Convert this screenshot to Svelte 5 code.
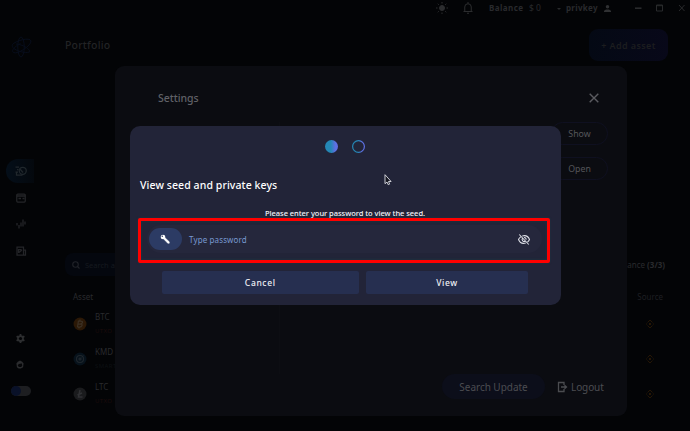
<script>
  const coins = [
    { name: 'BTC', kind: 'UTXO', color: '#2b1806', sub: '#1c0b0b' },
    { name: 'KMD', kind: 'SMART CHAIN', color: '#07121b', sub: '#0d1013' },
    { name: 'LTC', kind: 'UTXO', color: '#1a1b1d', sub: '#1c0b0b' }
  ];
</script>

<div class="window">
  <header class="topbar">
    <svg class="sun" width="12" height="12" viewBox="0 0 24 24" fill="#2c2d2f" stroke="#2c2d2f" stroke-width="2"><circle cx="12" cy="12" r="5" /><path d="M12 0v3M12 21v3M0 12h3M21 12h3M3.5 3.5l2 2M18.500 18.500l2 2M20.500 3.500l-2 2M3.500 20.500l2-2" /></svg>
    <svg class="bell" width="10" height="12" viewBox="0 0 20 24" fill="none" stroke="#2c2d2f" stroke-width="2"><path d="M1 19h18M3.500 19V10a6.500 6.500 0 0 1 13 0v9M10 0v3M8 22.500h4" /></svg>
    <b class="balance">Balance</b><span class="amount">$ 0</span>
    <i class="caret"></i><b class="user">privkey</b>
    <svg class="person" width="7" height="7" viewBox="0 0 16 16" fill="#303133"><circle cx="8" cy="4" r="4" /><path d="M0 16v-2c0-5 16-5 16 0v2z" /></svg>
    <svg class="controls" width="54" height="8" viewBox="0 0 54 8" fill="none" stroke="#292a2c"><path d="M1 4.200h6.500" stroke-width="1.600" /><path d="M22.500 1h6v6h-6z M22 1.700h7M45 1l5.500 6M50.500 1L45 7" /></svg>
  </header>

  <div class="body">
    <nav>
      <svg class="logo" width="21" height="22" viewBox="0 0 42 44" fill="none" stroke="#070d1b" stroke-width="2"><ellipse cx="20" cy="22" rx="6.500" ry="20" /><path d="M3 17c5-7 35-16 37-7 1 9-28 28-35 23-6-4 4-13 14-18M3 17c-5 9 22 19 34 15 3-5-15-16-27-16" /></svg>
      <div class="navitem active">
        <svg width="12" height="10" viewBox="0 0 24 20" fill="none" stroke="#20272c" stroke-width="2.500"><path d="M1 2h7M4 7h3M1 12h5M3 12v6h12" /><circle cx="15.500" cy="9.500" r="7" /><path d="M10 6l6 7" /></svg>
      </div>
      <div class="navitem">
        <svg width="10" height="10" viewBox="0 0 20 20" fill="none" stroke="#242528" stroke-width="2.500"><rect x="1.500" y="2" width="17" height="16" rx="2" /><path d="M2 6h16M5 11h5M13 11h4" stroke-width="3" /></svg>
      </div>
      <div class="navitem">
        <svg width="10" height="10" viewBox="0 0 20 20" fill="none" stroke="#242528" stroke-width="2.600"><path d="M2 8v5M6 12v7M10 7v8M14 1v14M18 5v6" /></svg>
      </div>
      <div class="navitem">
        <svg width="11" height="10" viewBox="0 0 22 20" fill="none" stroke="#242528" stroke-width="2.500"><path d="M15 7V2H2v16h17V8h-4v10" /><path d="M5 14V7h6M6 13l6-5" /></svg>
      </div>
      <svg class="gear" width="9" height="9" viewBox="0 0 20 20"><g fill="#2d2e30"><circle cx="10" cy="10" r="7.500" /><path d="M8 0h4v20H8z" /><path d="M8 0h4v20H8z" transform="rotate(60 10 10)" /><path d="M8 0h4v20H8z" transform="rotate(120 10 10)" /></g><circle cx="10" cy="10" r="3.500" fill="#030406" /></svg>
      <svg class="face" width="8" height="9" viewBox="0 0 18 18"><path d="M9 0l4 2 4 4-1 9-5 3H6l-4-3L1 6l4-4z" fill="#2b2c2e" /><path d="M4 11c1-5 5-2 9-5l1 6c-2 4-8 4-10-1z" fill="#050608" /></svg>
      <div class="toggle"><i></i></div>
    </nav>

    <main>
      <div class="pagehead"><h1>Portfolio</h1><button class="add">+ Add asset</button></div>
      <div class="filters">
        <div class="search">
          <svg width="8" height="8" viewBox="0 0 16 16" fill="none" stroke="#212329" stroke-width="2.200"><circle cx="7" cy="7" r="5.500" /><path d="M11 11l4 4" /></svg>
          <span>Search asset</span>
        </div>
        <span class="withbalance">Assets with balance <b>(3/3)</b></span>
      </div>
      <div class="thead"><span>Asset</span><span class="source">Source</span></div>
      {#each coins as coin}
        <div class="row">
          <svg class="coin" width="14" height="14" viewBox="0 0 28 28">
            <circle cx="14" cy="14" r="13" fill={coin.color} />
            {#if coin.name === 'BTC'}
              <path d="M11 7l-2 13M10 8h5q5 0 4 3-1 3-5 3h-4 5q4 0 3 3-1 3-5 3H9M14 5v3M12 20v3" fill="none" stroke="#3b3024" stroke-width="2.500" />
            {:else if coin.name === 'KMD'}
              <circle cx="14" cy="14" r="7" fill="none" stroke="#20272d" stroke-width="2.200" /><path d="M14 11l3 3-3 3-3-3zM17 11l4-4" fill="#20272d" stroke="#20272d" stroke-width="1.600" />
            {:else}
              <path d="M14 6l-3 14h8M9 16l9-4" fill="none" stroke="#303134" stroke-width="3" />
            {/if}
          </svg>
          <div class="names"><span>{coin.name}</span><small style:color={coin.sub}>{coin.kind}</small></div>
          <svg class="chain" width="8" height="8" viewBox="0 0 16 16" fill="none" stroke="#251605" stroke-width="2"><path d="M3 5l5-5 5 5M3 11l5 5 5-5M8 6l2 2-2 2-2-2zM0 8h2M14 8h2" /></svg>
        </div>
      {/each}
    </main>
  </div>

  <section class="settings">
    <div class="sethead">
      <h2>Settings</h2>
      <svg width="10" height="10" viewBox="0 0 10 10" stroke="#5a5b60" stroke-width="1.400"><path d="M.7.7l8.600 8.600M9.300.7L.7 9.300" /></svg>
    </div>
    <div class="setbody">
      <div class="pane">
        <button>Show</button>
        <button>Open</button>
      </div>
    </div>
    <footer>
      <button class="update">Search Update</button>
      <span class="logout">
        <svg width="9" height="10" viewBox="0 0 18 20" fill="none" stroke="#4b4c50" stroke-width="2.600"><path d="M12 6V1H1v18h11v-5M6 10h10M13 6.500l4 3.500-4 3.500" /></svg>
        <span>Logout</span>
      </span>
    </footer>
  </section>

  <section class="dialog">
    <div class="steps">
      <svg width="40" height="13" viewBox="0 0 40 13">
        <defs>
          <linearGradient id="dotfill"><stop offset=".45" stop-color="#2487b5" /><stop offset=".8" stop-color="#5e70e4" /></linearGradient>
        </defs>
        <circle cx="6.500" cy="6.500" r="6.500" fill="url(#dotfill)" />
        <circle cx="33.500" cy="6.500" r="5.900" fill="none" stroke="url(#dotfill)" stroke-width="1.200" />
      </svg>
    </div>
    <h3>View seed and private keys</h3>
    <p>Please enter your password to view the seed.</p>
    <div class="highlight">
      <div class="field">
        <span class="key"><svg width="10" height="10" viewBox="0 0 20 20"><path d="M9.500 7L18.500 15.500V18.500H15.500L14 17V15.500H12.500L7 9.500Z" fill="#fff" stroke="#fff" /><circle cx="6" cy="6" r="4.600" fill="#fff" /><circle cx="4.500" cy="4.700" r="1.500" fill="#2c3b64" /></svg></span>
        <span class="placeholder">Type password</span>
        <svg class="eye" width="12" height="11" viewBox="0 0 24 22" fill="none" stroke="#dddfe7" stroke-width="2.100"><path d="M8.500 4C15 2 20.500 5 23 11c-1 2.200-2.300 3.600-4 5M15.500 18C9 20 3.500 17 1 11c1-2.200 2.500-4 4.500-5.300M2.500 1L21.500 21M9 8a4.300 4.300 0 0 0 6 6M12 6.800c3 0 4.500 2 4.200 4.600" /></svg>
      </div>
    </div>
    <div class="actions"><button class="cancel">Cancel</button><button class="view">View</button></div>
  </section>

  <svg class="cursor" width="8" height="12" viewBox="0 0 8 12"><path d="M1 .7v9l2-1.700 1.200 2.700 1.400-.6-1.100-2.600h2.600z" fill="#151620" stroke="#dedfe5" stroke-width=".9" /></svg>
</div>

<style>
  :global(body) { background: #030406; overflow: hidden; }
  .window { position: relative; box-sizing: border-box; width: 690px; height: 431px; overflow: hidden; background: #030406; color: #292a2d; font-family: "Noto Sans", sans-serif; font-size: 8px; white-space: nowrap; }
  svg { display: block; flex: none; overflow: visible; }
  h1, h2, h3, p { margin: 0; font-weight: 500; }
  button { border: 0; padding: 0; margin: 0; font: inherit; color: inherit; box-sizing: border-box; }

  .topbar { height: 16px; display: flex; align-items: center; padding-left: 436px; line-height: 16px; }
  .bell { margin-left: 15px; }
  .balance { margin-left: 16px; width: 36px; letter-spacing: .45px; }
  .amount { margin-left: 4px; width: 14px; font-size: 8.500px; }
  .caret { margin: 1px 5px 0 14px; border: 2px solid transparent; border-top-color: #292a2c; border-bottom: 0; }
  .user { width: 34px; letter-spacing: .3px; }
  .person { margin-left: 4px; }
  .controls { margin-left: 23px; }

  .body { display: flex; height: 415px; }
  nav { width: 41px; height: 100%; flex: none; display: flex; flex-direction: column; align-items: flex-start; }
  .logo { margin: 20px 0 101px 11px; }
  .navitem { height: 24px; width: 28px; margin: 0 0 2.500px 6px; display: flex; align-items: center; justify-content: center; padding-left: 2px; box-sizing: border-box; }
  .active { border-radius: 12px 0 0 12px; background: linear-gradient(90deg, #040e19, #04080d); }
  .gear { margin: 68.500px 0 17.500px 16px; }
  .face { margin-left: 16px; }
  .toggle { margin: 17px 0 0 11px; width: 20px; height: 10px; border-radius: 5px; background: #1d1e21; }
  .toggle i { display: block; width: 10px; height: 10px; border-radius: 50%; background: #091128; }

  main { flex: 1; padding-left: 24px; padding-right: 22px; }
  .pagehead { display: flex; align-items: center; justify-content: space-between; height: 32px; margin-top: 13px; }
  h1 { font-size: 10.500px; color: #222325; letter-spacing: .2px; }
  .add { width: 79px; height: 32px; border-radius: 9px; background: linear-gradient(90deg, #040914, #080819); font-size: 9px; font-weight: 600; letter-spacing: .4px; color: #1c1d1f; }
  .filters { display: flex; justify-content: space-between; align-items: center; margin-top: 192px; height: 23px; padding-right: 3px; }
  .search { width: 150px; height: 23px; border-radius: 8px; background: #04070e; display: flex; align-items: center; gap: 5px; padding-left: 7px; box-sizing: border-box; font-size: 7.500px; color: #15191f; }
  .thead { height: 31px; display: flex; align-items: center; justify-content: space-between; padding: 0 5px 0 8px; box-sizing: border-box; margin-top: 5px; font-size: 8px; }
  .source { color: #1e1f22; }
  .row { height: 35px; display: flex; align-items: center; padding: 0 14px 0 8px; position: relative; top: -6px; }
  .coin { margin-right: 8px; }
  .names { display: flex; flex-direction: column; line-height: 14px; width: 60px; font-size: 8px; }
  .names small { font-size: 6px; letter-spacing: .4px; }
  .chain { margin-left: auto; }

  .settings { position: absolute; left: 115px; top: 66px; width: 512px; height: 350px; border-radius: 9px; background: #0b0c11; display: flex; flex-direction: column; box-sizing: border-box; }
  .sethead { display: flex; justify-content: space-between; align-items: center; padding: 0 28px 0 43px; height: 50px; margin-top: 7px; }
  h2 { font-size: 10.500px; color: #606167; letter-spacing: -.05px; }
  .setbody { flex: 1; display: flex; padding-left: 164px; margin-top: -1px; }
  .pane { flex: 1; border-left: 1px solid #0d0e13; display: flex; flex-direction: column; align-items: flex-end; gap: 12px; padding-right: 19px; }
  .pane button { width: 57px; height: 23px; border-radius: 12px; border: 1.500px solid #0f1020; background: transparent; color: #55565a; font-size: 8.800px; }
  footer { height: 42px; display: flex; align-items: flex-start; padding-left: 327px; }
  .update { width: 103px; height: 25px; border-radius: 12.500px; background: #0c0e1a; color: #4b4c51; font-size: 10px; letter-spacing: -.03px; }
  .logout { display: flex; align-items: center; gap: 4px; height: 25px; margin-left: 13px; color: #4b4c51; font-size: 10px; letter-spacing: -.1px; }

  .dialog { position: absolute; left: 129.500px; top: 126px; width: 431px; height: 179px; border-radius: 10px; background: #222438; box-sizing: border-box; color: #fff; }
  .steps { display: flex; justify-content: center; padding: 14px 0 0 0; }
  h3 { margin: 24px 0 0 10.500px; height: 16px; line-height: 16px; font-size: 10.500px; font-weight: 500; letter-spacing: .09px; }
  p { height: 12px; line-height: 12px; margin-top: 14px; font-size: 7.500px; letter-spacing: -.035px; text-align: center; color: #f5f5f8; }
  .highlight { box-sizing: border-box; width: 412px; height: 45px; margin: -1px 0 0 8px; border: 3.500px solid #ff0000; border-radius: 2px; padding: 4px; box-shadow: 0 0 2px #193a46, inset 0 0 3px #193a46; }
  .field { width: 395px; height: 28px; margin-left: 2px; border-radius: 14px; background: #25273c; display: flex; align-items: center; padding: 0 12px 0 2px; box-sizing: border-box; }
  .key { width: 33px; height: 22px; border-radius: 11px; background: #2c3b64; display: flex; align-items: center; justify-content: center; }
  .placeholder { margin-left: 7.500px; color: #7899d0; font-size: 8px; letter-spacing: .13px; }
  .eye { margin-left: auto; }
  .actions { display: flex; gap: 7.500px; padding-left: 32.500px; margin-top: 8px; }
  .actions button { height: 22.500px; border-radius: 2px; background: #262f50; font-size: 8.500px; font-weight: 500; letter-spacing: .65px; color: #f0f1f5; }
  .cancel { width: 196.500px; }
  .view { width: 162px; }
  .cursor { position: absolute; left: 384px; top: 174px; }
</style>
